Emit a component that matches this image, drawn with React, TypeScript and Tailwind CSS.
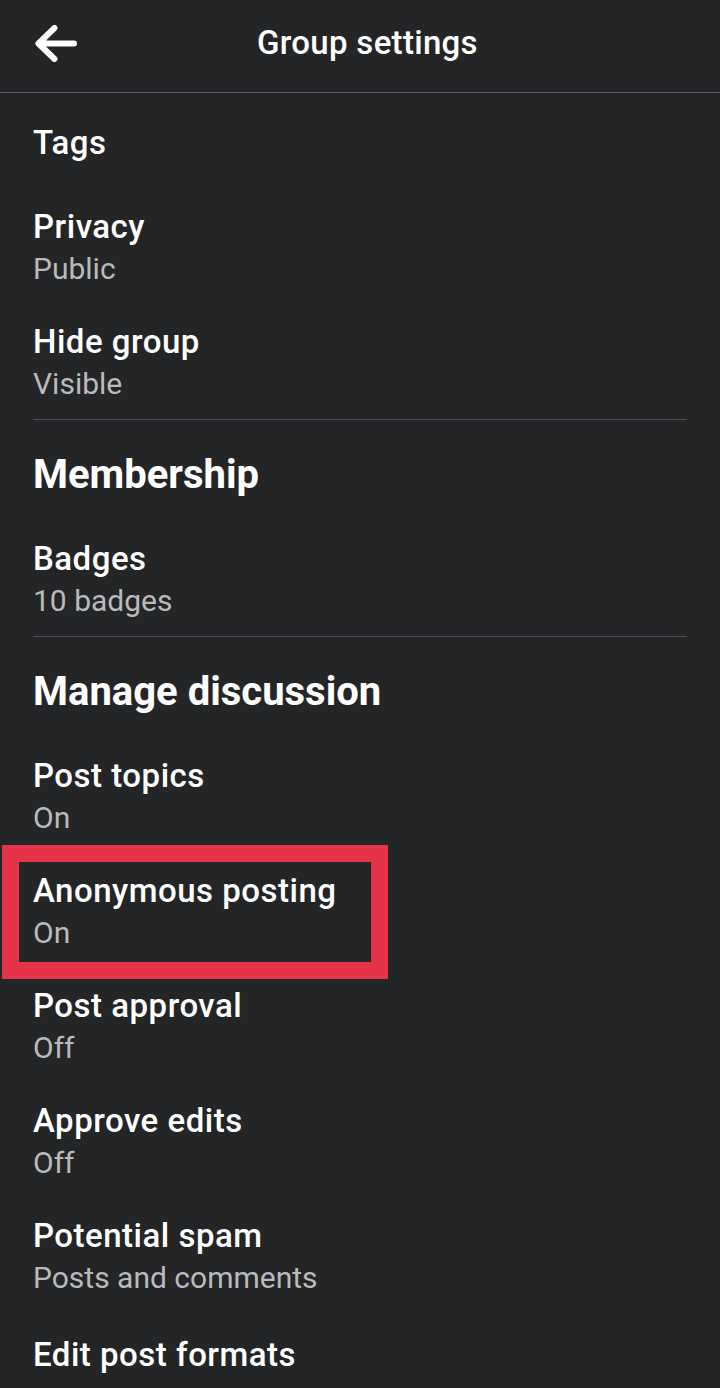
const font = { fontFamily: 'Roboto, "Noto Sans", sans-serif' };

type Item = { title: string; sub?: string };

function Row({ title, sub, pb = 'pb-[31px]' }: Item & { pb?: string }) {
  return (
    <div className={pb}>
      <div className="text-[33px] leading-[42px] font-medium tracking-[0.5px] text-white">{title}</div>
      {sub && <div className="text-[30px] leading-[42px] text-[#b9babd]">{sub}</div>}
    </div>
  );
}

function Divider() {
  return <div className="h-px bg-[#4b4c4f]" />;
}

function Section({ title, pb }: { title: string; pb: string }) {
  return (
    <div className={`pt-[31px] ${pb} text-[40px] leading-[48px] font-bold text-white`}>{title}</div>
  );
}

export default function App() {
  return (
    <div className="min-h-[1388px] w-[720px] bg-[#242527] text-white overflow-hidden" style={font}>
      <div className="h-[93px] flex items-center border-b border-[#55565a]">
        <div className="pl-[35px] pb-[5px]">
          <svg width="42" height="37" viewBox="0 0 42 37" fill="none">
            <path d="M3.5 18.5 H39 M19.5 3 L3.5 18.5 L19.5 34" stroke="white" strokeWidth="6" strokeLinecap="round" strokeLinejoin="round" />
          </svg>
        </div>
        <div className="ml-[180px] pb-[7px] text-[33px] font-medium tracking-[0.3px]">Group settings</div>
      </div>

      <div className="px-[33px] pt-[29px]">
        <Row title="Tags" pb="pb-[42px]" />
        <Row title="Privacy" sub="Public" />
        <Row title="Hide group" sub="Visible" pb="pb-[14px]" />
        <Divider />
        <Section title="Membership" pb="pb-[39px]" />
        <Row title="Badges" sub="10 badges" pb="pb-[14px]" />
        <Divider />
        <Section title="Manage discussion" pb="pb-[39px]" />
        <Row title="Post topics" sub="On" />
        <div className="relative">
          <div className="absolute left-[-31px] top-[-25px] w-[386px] h-[134px] border-[17px] border-[#e5344a]" />
          <Row title="Anonymous posting" sub="On" />
        </div>
        <Row title="Post approval" sub="Off" />
        <Row title="Approve edits" sub="Off" />
        <Row title="Potential spam" sub="Posts and comments" />
        <div className="pt-[4px]">
          <Row title="Edit post formats" />
        </div>
      </div>
    </div>
  );
}
